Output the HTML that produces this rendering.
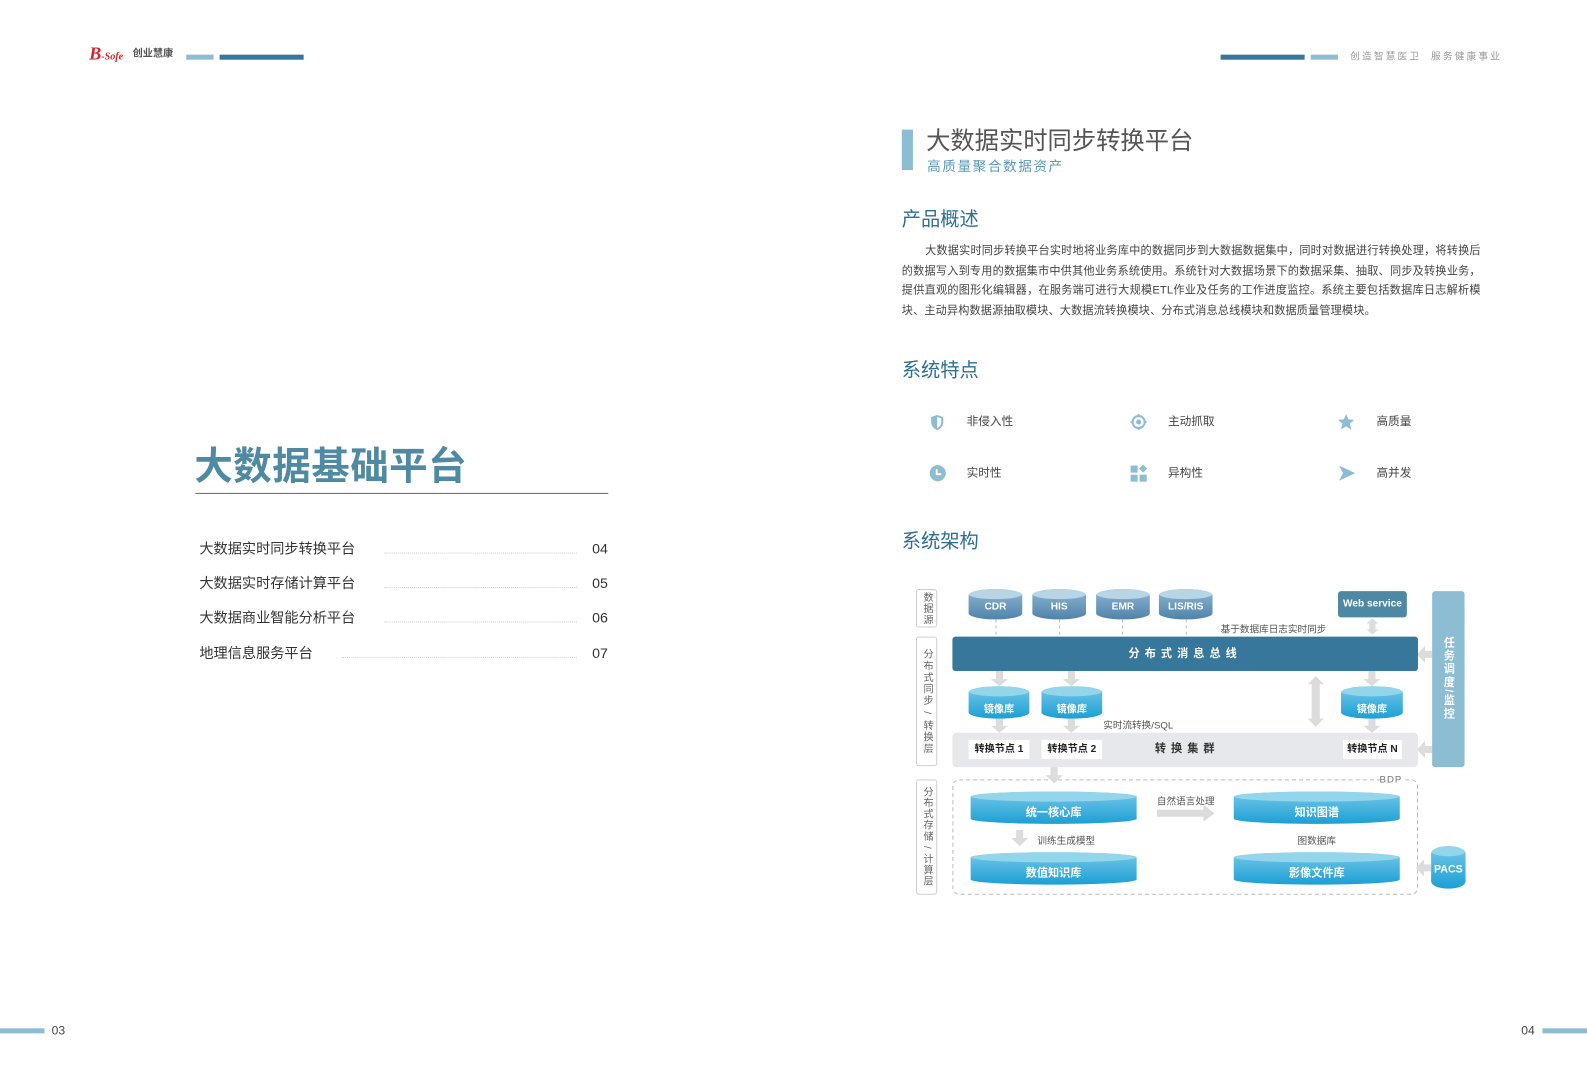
<!DOCTYPE html>
<html><head><meta charset="utf-8">
<style>
*{margin:0;padding:0;box-sizing:border-box}
html,body{width:1587px;height:1084px;overflow:hidden;background:#fff}
body{font-family:"Liberation Sans","Noto Sans CJK SC",sans-serif;color:#444}
#w{position:absolute;left:0;top:0;width:1568px;height:1071px;transform:scale(1.01212);transform-origin:0 0}
.a{position:absolute;white-space:nowrap}
.h2{position:absolute;left:891px;font-size:19px;color:#2c6f93;line-height:1}
.cyl{position:absolute;border-radius:50% / 6px;color:#fff;font-weight:bold;font-size:10px;text-align:center;overflow:hidden}
.cyl::before{content:"";position:absolute;left:0;right:0;top:0;height:10px;border-radius:50%;}
.cyl span{position:relative;z-index:1}
.src{background:linear-gradient(#8fb6d2,#4f83ab)}
.src::before{background:#b8d5e6}
.blu{background:linear-gradient(#74c8e8,#1c9fd4)}
.blu::before{background:#93d6ec}
.vl{position:absolute;border:1px solid #cfcfcf;border-radius:3px;writing-mode:vertical-rl;font-size:10px;color:#666;display:flex;align-items:center;justify-content:center;letter-spacing:1px}
.node{position:absolute;background:#fff;font-size:10px;font-weight:bold;color:#222;text-align:center;line-height:19px;height:19px}
.lbl{position:absolute;font-size:9.5px;color:#555;white-space:nowrap}
.toc{position:absolute;left:197px;font-size:14px;color:#333;line-height:1}
.dots{position:absolute;border-bottom:1px dotted #ccc;height:1px}
.num{position:absolute;left:585px;font-size:14px;color:#333;line-height:1}
.ft{position:absolute;font-size:11.5px;color:#444;line-height:1}
</style></head><body><div id="w">

<!-- header -->
<div class="a" style="left:88px;top:44px;font-family:'Liberation Serif',serif;font-style:italic;font-weight:bold;color:#d8232a;font-size:18px;line-height:1">B<span style="font-size:10px">-Sofe</span></div>
<div class="a" style="left:131px;top:49px;font-size:10px;color:#555;font-weight:bold;line-height:1">创业慧康</div>
<div class="a" style="left:184px;top:54px;width:27px;height:5px;background:#8dbdd3"></div>
<div class="a" style="left:217px;top:54px;width:83px;height:5px;background:#37779b"></div>
<div class="a" style="left:1206px;top:54px;width:83px;height:5px;background:#37779b"></div>
<div class="a" style="left:1295px;top:54px;width:27px;height:5px;background:#8dbdd3"></div>
<div class="a" style="left:1334px;top:52px;font-size:9.5px;color:#999;letter-spacing:2.2px;line-height:1">创造智慧医卫&nbsp;&nbsp;服务健康事业</div>

<!-- left page -->
<div class="a" style="left:192px;top:443px;font-size:38px;font-weight:bold;color:#4f8aa3;letter-spacing:0.5px;line-height:1">大数据基础平台</div>
<div class="a" style="left:193px;top:487px;width:408px;height:1px;background:#666"></div>
<div class="toc" style="top:535px">大数据实时同步转换平台</div><div class="dots" style="left:380px;top:546px;width:190px"></div><div class="num" style="top:535px">04</div>
<div class="toc" style="top:569px">大数据实时存储计算平台</div><div class="dots" style="left:380px;top:580px;width:190px"></div><div class="num" style="top:569px">05</div>
<div class="toc" style="top:603px">大数据商业智能分析平台</div><div class="dots" style="left:380px;top:614px;width:190px"></div><div class="num" style="top:603px">06</div>
<div class="toc" style="top:638px">地理信息服务平台</div><div class="dots" style="left:338px;top:649px;width:232px"></div><div class="num" style="top:638px">07</div>

<div class="a" style="left:0;top:1016px;width:44px;height:5px;background:#8dbdd3"></div>
<div class="a" style="left:51px;top:1012px;font-size:12px;color:#444;line-height:1">03</div>
<div class="a" style="left:1503px;top:1012px;font-size:12px;color:#444;line-height:1">04</div>
<div class="a" style="left:1524px;top:1016px;width:44px;height:5px;background:#8dbdd3"></div>

<!-- right page -->
<div class="a" style="left:891px;top:128px;width:11px;height:40px;background:#8dbdd3"></div>
<div class="a" style="left:915px;top:128px;font-size:24px;color:#555;line-height:1">大数据实时同步转换平台</div>
<div class="a" style="left:916px;top:158px;font-size:13.5px;color:#5b9ab8;letter-spacing:1.5px;line-height:1">高质量聚合数据资产</div>

<div class="h2" style="top:208px">产品概述</div>
<div class="a" style="left:891px;top:239px;width:572px;white-space:normal;font-size:11px;line-height:19.5px;color:#444;text-indent:23px;text-align:justify;letter-spacing:0.15px">大数据实时同步转换平台实时地将业务库中的数据同步到大数据数据集中，同时对数据进行转换处理，将转换后的数据写入到专用的数据集市中供其他业务系统使用。系统针对大数据场景下的数据采集、抽取、同步及转换业务，提供直观的图形化编辑器，在服务端可进行大规模ETL作业及任务的工作进度监控。系统主要包括数据库日志解析模块、主动异构数据源抽取模块、大数据流转换模块、分布式消息总线模块和数据质量管理模块。</div>

<div class="h2" style="top:357px">系统特点</div>
<svg class="a" style="left:918px;top:409px" width="16" height="17" viewBox="0 0 16 17"><path d="M8 1 L14 3 V8 C14 12 11 15 8 16 C5 15 2 12 2 8 V3 Z" fill="#8dbdd3"/><path d="M8 3 L12 4.5 V8 C12 11 10 13 8 14 Z" fill="#fff"/></svg>
<div class="ft" style="left:955px;top:412px">非侵入性</div>
<svg class="a" style="left:1116px;top:408px" width="18" height="18" viewBox="0 0 18 18"><circle cx="9" cy="9" r="6" fill="none" stroke="#8dbdd3" stroke-width="2"/><circle cx="9" cy="9" r="2.5" fill="#8dbdd3"/><path d="M9 1v3M9 14v3M1 9h3M14 9h3" stroke="#8dbdd3" stroke-width="1.6"/></svg>
<div class="ft" style="left:1154px;top:412px">主动抓取</div>
<svg class="a" style="left:1321px;top:408px" width="18" height="18" viewBox="0 0 18 18"><path d="M9 1 L11.3 6.3 L17 6.8 L12.7 10.6 L14 16.3 L9 13.3 L4 16.3 L5.3 10.6 L1 6.8 L6.7 6.3 Z" fill="#8dbdd3"/></svg>
<div class="ft" style="left:1360px;top:412px">高质量</div>
<svg class="a" style="left:918px;top:459px" width="17" height="17" viewBox="0 0 17 17"><circle cx="8.5" cy="8.5" r="8" fill="#8dbdd3"/><path d="M7.5 4.5 V9.5 H12" fill="none" stroke="#fff" stroke-width="1.8"/></svg>
<div class="ft" style="left:955px;top:463px">实时性</div>
<svg class="a" style="left:1117px;top:459px" width="17" height="17" viewBox="0 0 17 17"><rect x="0" y="1" width="7" height="7" fill="#8dbdd3"/><rect x="0" y="10" width="7" height="7" fill="#8dbdd3"/><rect x="9" y="10" width="7" height="7" fill="#8dbdd3"/><path d="M12.5 0 L16.5 4 L12.5 8 L8.5 4 Z" fill="#8dbdd3"/></svg>
<div class="ft" style="left:1154px;top:463px">异构性</div>
<svg class="a" style="left:1322px;top:459px" width="18" height="17" viewBox="0 0 18 17"><path d="M1 1 L17 8.5 L1 16 L5 8.5 Z" fill="#8dbdd3"/></svg>
<div class="ft" style="left:1360px;top:463px">高并发</div>

<div class="h2" style="top:526px">系统架构</div>

<!-- diagram -->
<div class="vl" style="left:905px;top:582px;width:21px;height:38px">数据源</div>
<div class="vl" style="left:905px;top:629px;width:21px;height:128px;letter-spacing:1.5px">分布式同步 / 转换层</div>
<div class="vl" style="left:905px;top:770px;width:21px;height:114px">分布式存储 / 计算层</div>

<svg class="a" style="left:0;top:0" width="1568" height="1071">
 <g stroke="#bbb" stroke-dasharray="3 3" stroke-width="1">
  <path d="M984 612V629M1047 612V629M1109 612V629M1172 612V629"/>
 </g>
 <rect x="941.5" y="770.5" width="459" height="113" rx="6" fill="none" stroke="#bbb" stroke-dasharray="4 3"/>
 <rect x="1366" y="764" width="22" height="12" fill="#fff"/>
 <g fill="#dcdcdc">
  <path d="M984 663h7v8h5l-8.5 7l-8.5-7h5z"/>
  <path d="M1055 663h7v8h5l-8.5 7l-8.5-7h5z"/>
  <path d="M1352 663h7v8h5l-8.5 7l-8.5-7h5z"/>
  <path d="M984 710h7v7h5l-8.5 7l-8.5-7h5z"/>
  <path d="M1055 710h7v7h5l-8.5 7l-8.5-7h5z"/>
  <path d="M1352 710h7v7h5l-8.5 7l-8.5-7h5z"/>
  <path d="M1038 758h7v8h5l-8.5 8l-8.5-8h5z"/>
  <path d="M1004 820h7v8h5l-8.5 8l-8.5-8h5z"/>
  <path d="M1300 668l8 8h-4v34h4l-8 8l-8-8h4v-34h-4z"/>
  <path d="M1356 611l6 5h-3v6h3l-6 5l-6-5h3v-6h-3z"/>
  <path d="M1415 643v7h-7v5l-8-8.5l8-8.5v5z"/>
  <path d="M1415 737v7h-7v5l-8-8.5l8-8.5v5z"/>
  <path d="M1414 854v7h-7v5l-8-8.5l8-8.5v5z"/>
  <path d="M1143 800h46v-5l11 8.5l-11 8.5v-5h-46z"/>
 </g>
</svg>

<div class="cyl src" style="left:957px;top:582px;width:53px;height:30px;padding-top:12px"><span>CDR</span></div>
<div class="cyl src" style="left:1020px;top:582px;width:53px;height:30px;padding-top:12px"><span>HIS</span></div>
<div class="cyl src" style="left:1083px;top:582px;width:53px;height:30px;padding-top:12px"><span>EMR</span></div>
<div class="cyl src" style="left:1145px;top:582px;width:53px;height:30px;padding-top:12px"><span>LIS/RIS</span></div>
<div class="a" style="left:1322px;top:584px;width:68px;height:26px;background:#4f88a2;border-radius:3px;color:#fff;font-size:10px;font-weight:bold;text-align:center;line-height:26px">Web service</div>
<div class="lbl" style="left:1206px;top:614px">基于数据库日志实时同步</div>

<div class="a" style="left:941px;top:629px;width:460px;height:34px;background:#37779b;border-radius:3px;color:#fff;font-size:11px;font-weight:bold;text-align:center;line-height:35px;letter-spacing:5px">分布式消息总线</div>

<div class="a" style="left:1415px;top:584px;width:32px;height:174px;background:#8dbdd3;border-radius:3px;color:#fff;font-size:11px;font-weight:bold;writing-mode:vertical-rl;display:flex;align-items:center;justify-content:center;letter-spacing:2px">任务调度/监控</div>

<div class="cyl blu" style="left:957px;top:678px;width:60px;height:32px;padding-top:14px"><span>镜像库</span></div>
<div class="cyl blu" style="left:1029px;top:678px;width:60px;height:32px;padding-top:14px"><span>镜像库</span></div>
<div class="cyl blu" style="left:1325px;top:678px;width:61px;height:32px;padding-top:14px"><span>镜像库</span></div>
<div class="lbl" style="left:1090px;top:709px">实时流转换/SQL</div>

<div class="a" style="left:941px;top:724px;width:460px;height:34px;background:#e6e8ec;border-radius:4px"></div>
<div class="node" style="left:957px;top:731px;width:60px;line-height:20px">转换节点 1</div>
<div class="node" style="left:1029px;top:731px;width:60px;line-height:20px">转换节点 2</div>
<div class="node" style="left:1327px;top:731px;width:58px;line-height:20px">转换节点 N</div>
<div class="a" style="left:1141px;top:735px;font-size:11px;font-weight:bold;color:#333;letter-spacing:5px;line-height:1">转换集群</div>

<div class="lbl" style="left:1363px;top:765px;color:#777;letter-spacing:1px">BDP</div>
<div class="cyl blu" style="left:959px;top:782px;width:164px;height:32px;padding-top:12px;border-radius:50%/5px;font-size:11px"><span>统一核心库</span></div>
<div class="cyl blu" style="left:959px;top:842px;width:164px;height:32px;padding-top:12px;border-radius:50%/5px;font-size:11px"><span>数值知识库</span></div>
<div class="cyl blu" style="left:1219px;top:782px;width:164px;height:32px;padding-top:12px;border-radius:50%/5px;font-size:11px"><span>知识图谱</span></div>
<div class="cyl blu" style="left:1219px;top:842px;width:164px;height:32px;padding-top:12px;border-radius:50%/5px;font-size:11px"><span>影像文件库</span></div>
<div class="lbl" style="left:1143px;top:784px">自然语言处理</div>
<div class="lbl" style="left:1025px;top:823px">训练生成模型</div>
<div class="lbl" style="left:1282px;top:823px">图数据库</div>
<div class="cyl blu" style="left:1414px;top:836px;width:34px;height:42px;padding-top:17px;border-radius:50%/7px;font-size:10.5px"><span>PACS</span></div>

</div></body></html>
